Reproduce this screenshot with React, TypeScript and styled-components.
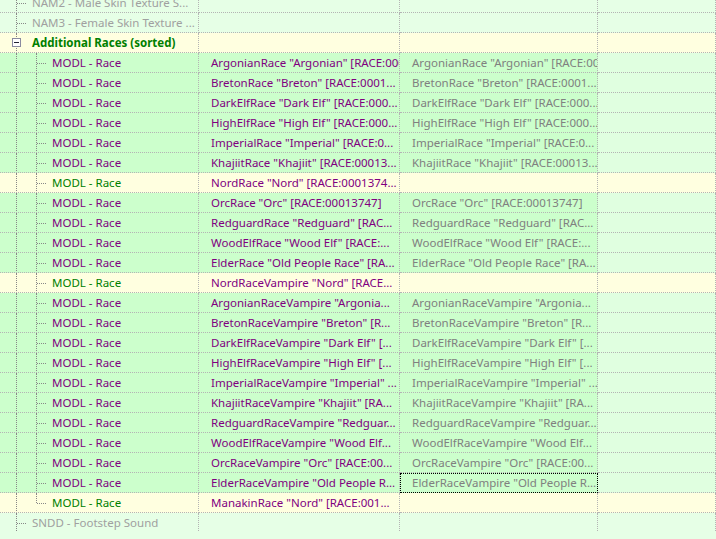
import React from 'react';
import styled, { createGlobalStyle } from 'styled-components';

const Global = createGlobalStyle`
    body {
        margin: 0;
        background: #e6ffe6;
        font-family: "Noto Sans", "Open Sans", sans-serif;
        font-size: 11.5px;
        overflow: hidden;
    }
`;

type Kind = 'dim' | 'header' | 'match' | 'single';

const bg = (k: Kind) =>
    k === 'match' ? '#ccffcc' : k === 'dim' ? '#e6ffe6' : '#ffffe0';

const Tree = styled.div`
    width: 716px;
    height: 539px;
    overflow: hidden;
    padding-top: 1px;
    margin-top: -8px;
`;

const Row = styled.div<{ $kind: Kind }>`
    display: grid;
    grid-template-columns: 199px 201px 198px 1fr;
    height: 20px;
    background: ${(p) => bg(p.$kind)};
`;

const Cell = styled.div<{ $tone?: string; $focus?: boolean; $bg?: string }>`
    display: flex;
    align-items: center;
    height: 20px;
    box-sizing: border-box;
    padding-left: 12px;
    border-right: 1px dotted #b4b4b4;
    border-bottom: 1px dotted #b4b4b4;
    color: ${(p) => p.$tone || '#800080'};
    background: ${(p) => p.$bg || 'transparent'};
    white-space: nowrap;
    overflow: hidden;
    ${(p) => p.$focus && 'outline: 1px dotted #000; outline-offset: -1px;'}
`;

const TreeCell = styled(Cell)`
    padding-left: 6px;
`;

const Indent = styled.div<{ $v: 'through' | 'tee' | 'elbow' | 'none'; $h?: boolean }>`
    position: relative;
    width: 20px;
    height: 20px;
    flex: none;
    &::before {
        content: '';
        position: absolute;
        left: 10px;
        top: 0;
        height: ${(p) => (p.$v === 'elbow' ? '10px' : p.$v === 'none' ? '0' : '20px')};
        border-left: 1px dotted #888;
    }
    &::after {
        content: '';
        position: absolute;
        left: 11px;
        top: 10px;
        width: ${(p) => (p.$h ? '9px' : '0')};
        border-top: 1px dotted #888;
    }
`;

const Expander = styled.div`
    position: absolute;
    left: 6px;
    top: 5px;
    width: 7px;
    height: 7px;
    border: 1px solid #8a8aa0;
    background: #fff;
    z-index: 1;
    &::after {
        content: '';
        position: absolute;
        left: 1px;
        top: 3px;
        width: 5px;
        border-top: 1px solid #223;
    }
`;

const Label = styled.span<{ $tone: string; $bold?: boolean }>`
    margin-left: 6px;
    color: ${(p) => p.$tone};
    font-weight: ${(p) => (p.$bold ? 700 : 400)};
`;

const races: [string, string | null][] = [
    ['ArgonianRace "Argonian" [RACE:0001...', 'ArgonianRace "Argonian" [RACE:0001...'],
    ['BretonRace "Breton" [RACE:0001...', 'BretonRace "Breton" [RACE:0001...'],
    ['DarkElfRace "Dark Elf" [RACE:000...', 'DarkElfRace "Dark Elf" [RACE:000...'],
    ['HighElfRace "High Elf" [RACE:000...', 'HighElfRace "High Elf" [RACE:000...'],
    ['ImperialRace "Imperial" [RACE:0...', 'ImperialRace "Imperial" [RACE:0...'],
    ['KhajiitRace "Khajiit" [RACE:00013...', 'KhajiitRace "Khajiit" [RACE:00013...'],
    ['NordRace "Nord" [RACE:0001374...', null],
    ['OrcRace "Orc" [RACE:00013747]', 'OrcRace "Orc" [RACE:00013747]'],
    ['RedguardRace "Redguard" [RAC...', 'RedguardRace "Redguard" [RAC...'],
    ['WoodElfRace "Wood Elf" [RACE:...', 'WoodElfRace "Wood Elf" [RACE:...'],
    ['ElderRace "Old People Race" [RA...', 'ElderRace "Old People Race" [RA...'],
    ['NordRaceVampire "Nord" [RACE...', null],
    ['ArgonianRaceVampire "Argonia...', 'ArgonianRaceVampire "Argonia...'],
    ['BretonRaceVampire "Breton" [R...', 'BretonRaceVampire "Breton" [R...'],
    ['DarkElfRaceVampire "Dark Elf" [...', 'DarkElfRaceVampire "Dark Elf" [...'],
    ['HighElfRaceVampire "High Elf" [...', 'HighElfRaceVampire "High Elf" [...'],
    ['ImperialRaceVampire "Imperial" ...', 'ImperialRaceVampire "Imperial" ...'],
    ['KhajiitRaceVampire "Khajiit" [RA...', 'KhajiitRaceVampire "Khajiit" [RA...'],
    ['RedguardRaceVampire "Redguar...', 'RedguardRaceVampire "Redguar...'],
    ['WoodElfRaceVampire "Wood Elf...', 'WoodElfRaceVampire "Wood Elf...'],
    ['OrcRaceVampire "Orc" [RACE:00...', 'OrcRaceVampire "Orc" [RACE:00...'],
    ['ElderRaceVampire "Old People R...', 'ElderRaceVampire "Old People R...'],
    ['ManakinRace "Nord" [RACE:001...', null],
];

const DimRow = ({ text }: { text: string }) => (
    <Row $kind="dim">
        <TreeCell>
            <Indent $v="tee" $h />
            <Label $tone="#a0a0a0">{text}</Label>
        </TreeCell>
        <Cell />
        <Cell />
        <Cell />
    </Row>
);

export default function App() {
    return (
        <>
            <Global />
            <Tree>
                <DimRow text="NAM2 - Male Skin Texture S..." />
                <DimRow text="NAM3 - Female Skin Texture ..." />
                <Row $kind="header">
                    <TreeCell>
                        <Indent $v="through">
                            <Expander />
                        </Indent>
                        <Label $tone="#008000" $bold>
                            Additional Races (sorted)
                        </Label>
                    </TreeCell>
                    <Cell />
                    <Cell />
                    <Cell />
                </Row>
                {races.map(([a, b], i) => {
                    const kind: Kind = b ? 'match' : 'single';
                    const last = i === races.length - 1;
                    return (
                        <Row key={i} $kind={kind}>
                            <TreeCell>
                                <Indent $v="through" />
                                <Indent $v={last ? 'elbow' : 'tee'} $h />
                                <Label $tone={b ? '#800080' : '#008000'}>MODL - Race</Label>
                            </TreeCell>
                            <Cell>{a}</Cell>
                            <Cell $tone="#808080" $focus={i === races.length - 2}>
                                {b}
                            </Cell>
                            <Cell $bg={b ? '#e0ffe0' : undefined} />
                        </Row>
                    );
                })}
                <DimRow text="SNDD - Footstep Sound" />
                <DimRow text="RNAM - Voice Forms" />
            </Tree>
        </>
    );
}
